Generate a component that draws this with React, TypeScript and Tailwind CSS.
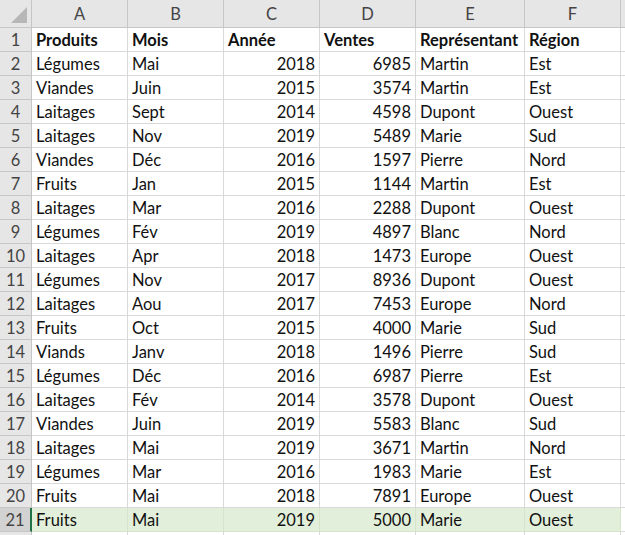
import React from "react";

const COLS = ["A", "B", "C", "D", "E", "F"];
const WIDTHS = ["w-[96px]", "w-[96px]", "w-[96px]", "w-[96px]", "w-[109px]", "w-[96px]"];

type Row = [string, string, string, string, string, string];

const HEAD: Row = ["Produits", "Mois", "Année", "Ventes", "Représentant", "Région"];

const ROWS: Row[] = [
  ["Légumes", "Mai", "2018", "6985", "Martin", "Est"],
  ["Viandes", "Juin", "2015", "3574", "Martin", "Est"],
  ["Laitages", "Sept", "2014", "4598", "Dupont", "Ouest"],
  ["Laitages", "Nov", "2019", "5489", "Marie", "Sud"],
  ["Viandes", "Déc", "2016", "1597", "Pierre", "Nord"],
  ["Fruits", "Jan", "2015", "1144", "Martin", "Est"],
  ["Laitages", "Mar", "2016", "2288", "Dupont", "Ouest"],
  ["Légumes", "Fév", "2019", "4897", "Blanc", "Nord"],
  ["Laitages", "Apr", "2018", "1473", "Europe", "Ouest"],
  ["Légumes", "Nov", "2017", "8936", "Dupont", "Ouest"],
  ["Laitages", "Aou", "2017", "7453", "Europe", "Nord"],
  ["Fruits", "Oct", "2015", "4000", "Marie", "Sud"],
  ["Viands", "Janv", "2018", "1496", "Pierre", "Sud"],
  ["Légumes", "Déc", "2016", "6987", "Pierre", "Est"],
  ["Laitages", "Fév", "2014", "3578", "Dupont", "Ouest"],
  ["Viandes", "Juin", "2019", "5583", "Blanc", "Sud"],
  ["Laitages", "Mai", "2019", "3671", "Martin", "Nord"],
  ["Légumes", "Mar", "2016", "1983", "Marie", "Est"],
  ["Fruits", "Mai", "2018", "7891", "Europe", "Ouest"],
  ["Fruits", "Mai", "2019", "5000", "Marie", "Ouest"],
];

function DataRow({ n, row, bold, selected }: { n?: number; row: Row; bold?: boolean; selected?: boolean }) {
  return (
    <div className="flex h-[24px]">
      <div
        className={
          selected
            ? "w-[32px] shrink-0 flex items-center justify-center pt-[2px] border-b border-[#c6c6c6] border-r-2 border-r-[#217346] bg-[#d2d2d2] text-[#444]"
            : "w-[32px] shrink-0 flex items-center justify-center pt-[2px] border-b border-r border-[#c6c6c6] bg-[#e6e6e6] text-[#444]"
        }
      >
        {n}
      </div>
      {row.map((v, i) => (
        <div
          key={i}
          className={
            "shrink-0 flex items-center px-[4px] pt-[2px] border-b border-r " +
            WIDTHS[i] +
            (selected ? " bg-[#e2efda] border-[#d6e4cc]" : " border-[#d9d9d9]") +
            (bold ? " font-bold" : "") +
            (!bold && (i === 2 || i === 3) ? " justify-end" : "")
          }
        >
          {v}
        </div>
      ))}
      <div className="flex-1 border-b border-[#d9d9d9]" />
    </div>
  );
}

export default function App() {
  return (
    <div
      className="w-[625px] h-[535px] overflow-hidden bg-white text-[16.5px] text-[#111] leading-none"
      style={{ fontFamily: "Lato, 'Open Sans', sans-serif" }}
    >
      <div className="flex h-[28px] bg-[#e6e6e6] text-[#444]">
        <div className="w-[32px] shrink-0 relative border-b border-r border-[#c6c6c6]">
          <div className="absolute right-[4px] bottom-[4px] w-0 h-0 border-l-[16px] border-l-transparent border-b-[16px] border-b-[#b7b7b7]" />
        </div>
        {COLS.map((c, i) => (
          <div
            key={c}
            className={"shrink-0 flex items-center justify-center pt-[1px] border-b border-r border-[#c6c6c6] " + WIDTHS[i]}
          >
            {c}
          </div>
        ))}
        <div className="flex-1 border-b border-[#c6c6c6]" />
      </div>
      <DataRow n={1} row={HEAD} bold />
      {ROWS.map((r, i) => (
        <DataRow key={i} n={i + 2} row={r} selected={i === ROWS.length - 1} />
      ))}
      <DataRow row={["", "", "", "", "", ""]} />
    </div>
  );
}
